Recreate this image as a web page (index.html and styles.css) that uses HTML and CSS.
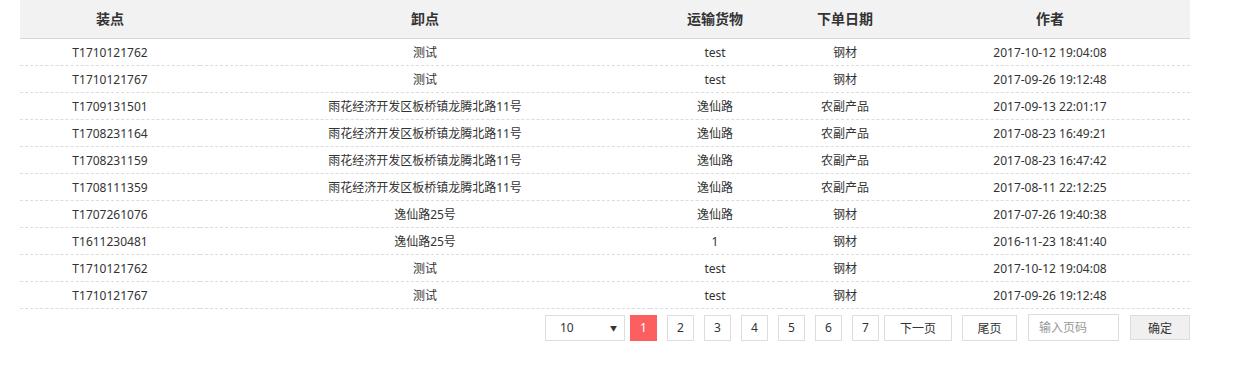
FILE: index.html
```html
<!DOCTYPE html>
<html lang="zh">
<head>
<meta charset="utf-8">
<title>订单列表</title>
<link rel="stylesheet" href="styles.css">
</head>
<body>
<div class="wrap">
  <table class="grid">
    <colgroup>
      <col class="c1"><col class="c2"><col class="c3"><col class="c4"><col class="c5">
    </colgroup>
    <thead>
      <tr><th>装点</th><th>卸点</th><th>运输货物</th><th>下单日期</th><th>作者</th></tr>
    </thead>
    <tbody>
      <tr><td>T1710121762</td><td>测试</td><td>test</td><td>钢材</td><td>2017-10-12 19:04:08</td></tr>
      <tr><td>T1710121767</td><td>测试</td><td>test</td><td>钢材</td><td>2017-09-26 19:12:48</td></tr>
      <tr><td>T1709131501</td><td>雨花经济开发区板桥镇龙腾北路11号</td><td>逸仙路</td><td>农副产品</td><td>2017-09-13 22:01:17</td></tr>
      <tr><td>T1708231164</td><td>雨花经济开发区板桥镇龙腾北路11号</td><td>逸仙路</td><td>农副产品</td><td>2017-08-23 16:49:21</td></tr>
      <tr><td>T1708231159</td><td>雨花经济开发区板桥镇龙腾北路11号</td><td>逸仙路</td><td>农副产品</td><td>2017-08-23 16:47:42</td></tr>
      <tr><td>T1708111359</td><td>雨花经济开发区板桥镇龙腾北路11号</td><td>逸仙路</td><td>农副产品</td><td>2017-08-11 22:12:25</td></tr>
      <tr><td>T1707261076</td><td>逸仙路25号</td><td>逸仙路</td><td>钢材</td><td>2017-07-26 19:40:38</td></tr>
      <tr><td>T1611230481</td><td>逸仙路25号</td><td>1</td><td>钢材</td><td>2016-11-23 18:41:40</td></tr>
      <tr><td>T1710121762</td><td>测试</td><td>test</td><td>钢材</td><td>2017-10-12 19:04:08</td></tr>
      <tr><td>T1710121767</td><td>测试</td><td>test</td><td>钢材</td><td>2017-09-26 19:12:48</td></tr>
    </tbody>
  </table>
  <div class="pager">
    <div class="size"><span>10</span><span class="arrow">▼</span></div>
    <a class="pg active">1</a>
    <a class="pg">2</a>
    <a class="pg">3</a>
    <a class="pg">4</a>
    <a class="pg">5</a>
    <a class="pg">6</a>
    <a class="pg">7</a>
    <a class="pg next">下一页</a>
    <a class="pg last">尾页</a>
    <input class="jump" type="text" placeholder="输入页码">
    <button class="ok">确定</button>
  </div>
</div>
</body>
</html>
```
FILE: styles.css
```css
html, body {
  margin: 0;
  padding: 0;
  background: #fff;
}
body {
  font-family: "Noto Sans", "Noto Sans CJK SC", sans-serif;
  font-size: 12px;
  color: #333;
}
.wrap {
  width: 1170px;
  padding: 0 20px;
}
.grid {
  width: 1170px;
  border-collapse: collapse;
  table-layout: fixed;
}
.c1 { width: 180px; }
.c2 { width: 450px; }
.c3 { width: 130px; }
.c4 { width: 130px; }
.c5 { width: 280px; }
.grid th {
  height: 38px;
  padding: 0;
  background: #f2f2f2;
  font-size: 14px;
  font-weight: bold;
  color: #333;
  text-align: center;
  line-height: 20px;
  border-bottom: 1px solid #d6d6d6;
}
.grid td {
  box-sizing: border-box;
  height: 27px;
  padding: 2px 0 0;
  text-align: center;
  line-height: 16px;
  border-bottom: 1px dashed #dcdcdc;
  white-space: nowrap;
}
.pager {
  display: flex;
  align-items: center;
  justify-content: flex-end;
  margin-top: 5px;
  height: 27px;
}
.size {
  box-sizing: border-box;
  width: 80px;
  height: 26px;
  border: 1px solid #ddd;
  display: flex;
  align-items: center;
  justify-content: space-between;
  padding: 0 7px 0 14px;
  font-size: 12px;
}
.size .arrow {
  font-size: 7px;
  color: #333;
}
.pg {
  box-sizing: border-box;
  height: 26px;
  min-width: 27px;
  border: 1px solid #ddd;
  display: flex;
  align-items: center;
  justify-content: center;
  margin-left: 10px;
  color: #333;
  font-size: 12px;
  cursor: pointer;
}
.pg.active {
  margin-left: 5px;
  background: #fb5f5f;
  border-color: #fb5f5f;
  color: #fff;
}
.pg.next {
  width: 68px;
  margin-left: 5px;
}
.pg.last {
  width: 55px;
}
.jump {
  box-sizing: border-box;
  width: 91px;
  height: 27px;
  margin: 0 0 0 11px;
  padding: 0 10px;
  border: 1px solid #ddd;
  font-family: inherit;
  font-size: 12px;
  color: #333;
  outline: none;
}
.jump::placeholder {
  color: #999;
}
.ok {
  box-sizing: border-box;
  width: 60px;
  height: 25px;
  margin-left: 11px;
  padding: 0;
  border: 1px solid #ddd;
  background: #f0f0f0;
  font-family: inherit;
  font-size: 12px;
  color: #333;
}
```
